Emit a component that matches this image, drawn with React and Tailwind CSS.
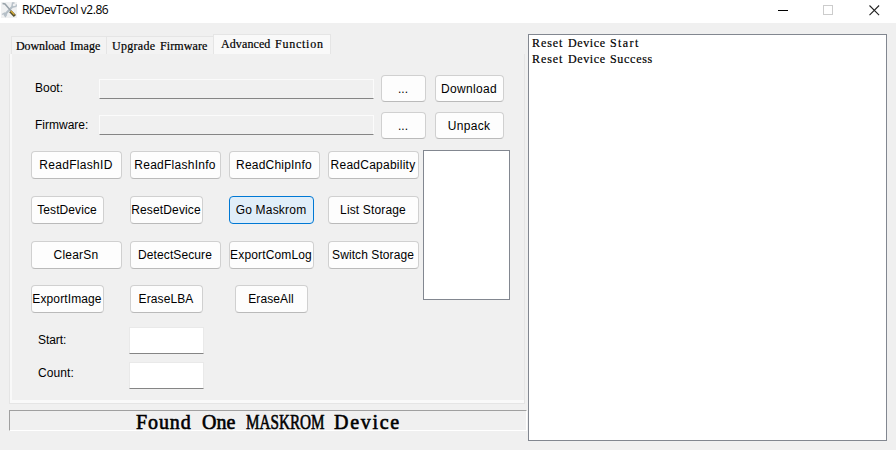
const SANS = "font-['Liberation_Sans',Arial,sans-serif]";
const SERIF = "font-['Liberation_Serif',SimSun,serif]";

function Button({ label, size = "w-[91px] h-[28px]", text = "", active = false }) {
  const tone = active
    ? "border-[#0078d4] bg-[#e0eef9]"
    : "border-[#d0d0d0] border-b-[#bababa] bg-[#fdfdfd]";
  return (
    <button
      className={`flex shrink-0 items-center justify-center whitespace-nowrap rounded-[4px] border p-0 pr-px text-[12px] leading-[14px] text-black ${tone} ${size} ${SANS}`}
    >
      <span className={text}>{label}</span>
    </button>
  );
}

function FileRow({ label, labelClass, action, actionText, className, fieldClass }) {
  return (
    <div className={`flex h-[27px] pl-[25px] ${className}`}>
      <div className={`w-[64px] pt-[6px] text-[12px] leading-[14px] ${SANS}`}>
        <span className={labelClass}>{label}</span>
      </div>
      <div className={`h-[20px] w-[275px] border border-b-[#858585] border-l-[#fbfbfb] border-r-[#fbfbfb] border-t-[#fbfbfb] bg-[#f0f0f0] ${fieldClass}`} />
      <div className="ml-[7px] flex gap-[9px]">
        <Button label="..." size="h-[27px] w-[45px]" />
        <Button label={action} size="h-[27px] w-[69px]" text={actionText} />
      </div>
    </div>
  );
}

function NumberRow({ label, className, text }) {
  return (
    <div className={`flex h-[27px] ${className}`}>
      <div className={`w-[98px] pl-[7px] text-[12px] leading-[14px] ${SANS}`}>
        <span className={text}>{label}</span>
      </div>
      <div className="w-[75px] border border-[#e9e9e9] border-b-[#858585] bg-white" />
    </div>
  );
}

function Tab({ className, children }) {
  return (
    <div className={`flex border border-b-0 border-[#e5e5e5] whitespace-nowrap text-[12px] leading-[14px] [-webkit-text-stroke:0.2px_#000] ${SERIF} ${className}`}>
      {children}
    </div>
  );
}

function ToolIcon() {
  return (
    <svg width="16" height="16" viewBox="0 0 16 16">
      <rect width="16" height="16" fill="#f0f1f2" />
      <path d="M3 13.4 12 4" stroke="#b4bec6" strokeWidth="2.2" />
      <path d="M1 12.5 3.4 11l2 1.8L4 15M11 4.2 11.5 1l2 0M12 5l3-.6.5-2" stroke="#b6c0c8" strokeWidth="1.4" fill="none" />
      <path d="M1.5 1.5 4 2l6 7" stroke="#98a2a9" strokeWidth="1.5" fill="none" />
      <path d="m9.3 9.2 4.6 4.8" stroke="#55502f" strokeWidth="3" />
      <path d="m9.8 9 3.6 3.6" stroke="#e3b437" strokeWidth="1.2" />
    </svg>
  );
}

function TitleBar() {
  return (
    <header className="flex h-[23px] items-start bg-white">
      <div className="ml-px mt-[2px]">
        <ToolIcon />
      </div>
      <h1 className="ml-[5px] mt-px font-['Open_Sans','Noto_Sans',sans-serif] text-[12px] font-normal leading-[18px] tracking-[-0.46px] text-black">
        RKDevTool v2.86
      </h1>
      <div className="ml-auto mr-[16px] mt-[5px] flex gap-[35px]">
        <svg className="-translate-x-px" width="10" height="11" viewBox="0 0 10 11"><path d="M0 5.5h10" stroke="#000" /></svg>
        <svg className="-translate-x-px" width="10" height="11" viewBox="0 0 10 11"><rect x=".5" y=".5" width="9" height="9" fill="none" stroke="#ccc" /></svg>
        <svg width="11" height="11" viewBox="0 0 11 11"><path d="m.5.5 9.6 9.6M10.1.5.5 10.1" stroke="#222" strokeWidth="1.1" /></svg>
      </div>
    </header>
  );
}

export default function App() {
  return (
    <div className="h-[450px] w-[896px] overflow-hidden bg-[#f0f0f0] text-black">
      <TitleBar />
      <main className="flex">
        <section className="w-[528px] shrink-0 pl-[9px] pt-[11px]">
          <nav className="flex h-[20px] items-end pl-[2px]">
            <Tab className="h-[18px] w-[95px] border-r-0 bg-[#f3f3f3] pl-[4px] pt-[2px]">
              <span className="w-[54px] tracking-[-0.1px]">Download</span>
              <span className="tracking-[0.1px]">Image</span>
            </Tab>
            <Tab className="h-[18px] w-[107px] border-r-0 bg-[#f3f3f3] pl-[5px] pt-[2px]">
              <span className="w-[48px] tracking-[0.3px]">Upgrade</span>
              <span className="tracking-[0.1px]">Firmware</span>
            </Tab>
            <Tab className="h-[20px] w-[118px] bg-[#f9f9f9] pl-[7px] pt-[2px]">
              <span className="w-[54px] tracking-[0.1px]">Advanced</span>
              <span className="tracking-[0.75px]">Function</span>
            </Tab>
          </nav>
          <div className="h-[350px] w-[516px] border border-t-0 border-[#e5e5e5]">
            <div className="h-[349px] border-b-[3px] border-l-2 border-[#f9f9f9]">
              <FileRow label="Boot:" action="Download" className="-ml-[2px] pt-[21px] h-[48px]" fieldClass="mt-[4px]" labelClass="" actionText="tracking-[0.3px]" />
              <FileRow label="Firmware:" action="Unpack" className="-ml-[2px] mt-[10px]" fieldClass="mt-[3px]" labelClass="" actionText="tracking-[0.3px]" />
              <div className="flex pl-[19px]">
                <div className="mt-[12px] w-[388px]">
                  <div className="flex gap-[8px]">
                    <Button label="ReadFlashID" text="tracking-[0.3px]" />
                    <Button label="ReadFlashInfo" text="tracking-[0.25px]" />
                    <Button label="ReadChipInfo" text="tracking-[0.2px]" />
                    <Button label="ReadCapability" text="tracking-[0.25px]" />
                  </div>
                  <div className="mt-[17px] flex">
                    <Button label="TestDevice" size="h-[28px] w-[73px]" text="tracking-[0.1px]" />
                    <Button label="ResetDevice" size="ml-[26px] h-[28px] w-[73px]" text="tracking-[0.15px]" />
                    <Button label="Go Maskrom" size="ml-[26px] h-[28px] w-[85px]" text="tracking-[0.2px]" active />
                    <Button label="List Storage" size="ml-[14px] h-[28px] w-[91px]" text="tracking-[0.15px]" />
                  </div>
                  <div className="mt-[17px] flex">
                    <Button label="ClearSn" text="tracking-[0.2px]" />
                    <Button label="DetectSecure" size="ml-[8px] h-[28px] w-[91px]" text="tracking-[0.1px]" />
                    <Button label="ExportComLog" size="ml-[8px] h-[28px] w-[85px]" text="tracking-[0.15px]" />
                    <Button label="Switch Storage" size="ml-[14px] h-[28px] w-[91px]" text="tracking-[0.08px]" />
                  </div>
                  <div className="mt-[16px] flex">
                    <Button label="ExportImage" size="h-[28px] w-[73px]" text="tracking-[0.12px]" />
                    <Button label="EraseLBA" size="ml-[26px] h-[28px] w-[73px]" text="tracking-[0.1px]" />
                    <Button label="EraseAll" size="ml-[32px] h-[28px] w-[73px]" text="tracking-[0.1px]" />
                  </div>
                  <NumberRow label="Start:" className="mt-[14px]" text="block pt-[6px] tracking-[-0.05px]" />
                  <NumberRow label="Count:" className="mt-[8px]" text="block pt-[4px] tracking-[0.1px]" />
                </div>
                <div className="ml-[4px] mt-[11px] h-[150px] w-[87px] border border-[#828790] bg-white" />
              </div>
            </div>
          </div>
          <div className={`mt-[6px] flex h-[21px] w-[518px] border border-b-white border-l-[#a0a0a0] border-r-white border-t-[#a0a0a0] pl-[126px] text-[20px] leading-[22px] [-webkit-text-stroke:0.6px_#000] ${SERIF}`}>
            <span className="w-[66px] tracking-[0.9px]">Found</span>
            <span className="w-[44px]">One</span>
            <span className="w-[88px] origin-left scale-x-[0.76]">MASKROM</span>
            <span className="tracking-[1.7px]">Device</span>
          </div>
        </section>
        <section className={`mt-[11px] h-[407px] w-[359px] border border-[#828790] bg-white pl-[3px] text-[12px] leading-[16px] [-webkit-text-stroke:0.2px_#000] ${SERIF}`}>
          <p className="flex h-[16px]">
            <span className="w-[36px] tracking-[0.9px]">Reset</span>
            <span className="w-[42px] tracking-[0.6px]">Device</span>
            <span className="tracking-[1.4px]">Start</span>
          </p>
          <p className="flex h-[16px]">
            <span className="w-[36px] tracking-[0.9px]">Reset</span>
            <span className="w-[42px] tracking-[0.6px]">Device</span>
            <span className="tracking-[0.7px]">Success</span>
          </p>
        </section>
      </main>
    </div>
  );
}
